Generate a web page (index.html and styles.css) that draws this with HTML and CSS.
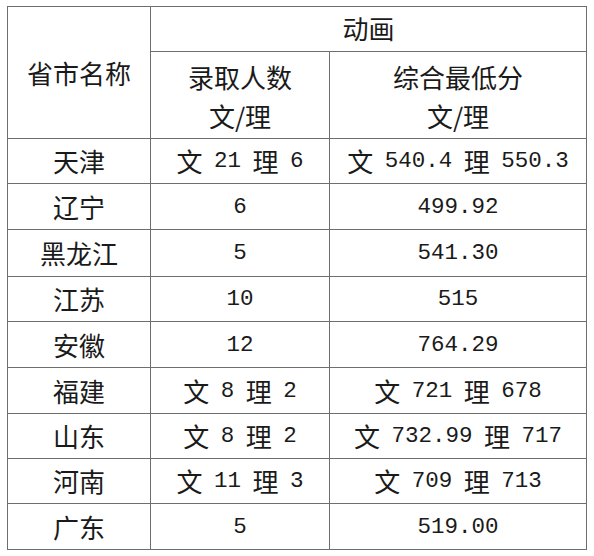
FILE: index.html
```html
<!DOCTYPE html>
<html lang="zh">
<head>
<meta charset="utf-8">
<link rel="stylesheet" href="styles.css">
</head>
<body>
<div class="sheet">
  <div class="cell name-head">省市名称</div>
  <div class="cell group-head">动画</div>
  <div class="cell sub-head">录取人数<br>文/理</div>
  <div class="cell sub-head">综合最低分<br>文/理</div>

  <div class="cell">天津</div>
  <div class="cell">文<span class="n"> 21 </span>理<span class="n"> 6</span></div>
  <div class="cell">文<span class="n"> 540.4 </span>理<span class="n"> 550.3</span></div>

  <div class="cell">辽宁</div>
  <div class="cell"><span class="n">6</span></div>
  <div class="cell"><span class="n">499.92</span></div>

  <div class="cell">黑龙江</div>
  <div class="cell"><span class="n">5</span></div>
  <div class="cell"><span class="n">541.30</span></div>

  <div class="cell">江苏</div>
  <div class="cell"><span class="n">10</span></div>
  <div class="cell"><span class="n">515</span></div>

  <div class="cell">安徽</div>
  <div class="cell"><span class="n">12</span></div>
  <div class="cell"><span class="n">764.29</span></div>

  <div class="cell">福建</div>
  <div class="cell">文<span class="n"> 8 </span>理<span class="n"> 2</span></div>
  <div class="cell">文<span class="n"> 721 </span>理<span class="n"> 678</span></div>

  <div class="cell">山东</div>
  <div class="cell">文<span class="n"> 8 </span>理<span class="n"> 2</span></div>
  <div class="cell">文<span class="n"> 732.99 </span>理<span class="n"> 717</span></div>

  <div class="cell">河南</div>
  <div class="cell">文<span class="n"> 11 </span>理<span class="n"> 3</span></div>
  <div class="cell">文<span class="n"> 709 </span>理<span class="n"> 713</span></div>

  <div class="cell">广东</div>
  <div class="cell"><span class="n">5</span></div>
  <div class="cell"><span class="n">519.00</span></div>
</div>
</body>
</html>
```
FILE: styles.css
```css
html, body {
  margin: 0;
  padding: 0;
  background: #ffffff;
}
body {
  padding: 6px 0 0 7px;
  font-family: "Noto Sans CJK SC", "DejaVu Sans", sans-serif;
  color: #1a1a1a;
}
.sheet {
  display: grid;
  width: 580px;
  box-sizing: border-box;
  padding: 1px;
  gap: 1px;
  background: #6e6e6e;
  grid-template-columns: 142px 178px 256px;
  grid-template-rows: 44px 86px 44px 45px 46px 44px 45px 45px 44px 44px 45px;
}
.cell {
  background: #ffffff;
  display: flex;
  align-items: center;
  justify-content: center;
  text-align: center;
  font-size: 26px;
  line-height: 30px;
  white-space: pre;
}
.name-head {
  grid-row: span 2;
}
.group-head {
  grid-column: span 2;
  padding-bottom: 3px;
}
.sub-head {
  line-height: 39px;
  white-space: normal;
  padding-top: 2px;
}
.n {
  font-family: "Liberation Mono", monospace;
  font-size: 22.5px;
  word-spacing: -2px;
  vertical-align: -2px;
}
```
